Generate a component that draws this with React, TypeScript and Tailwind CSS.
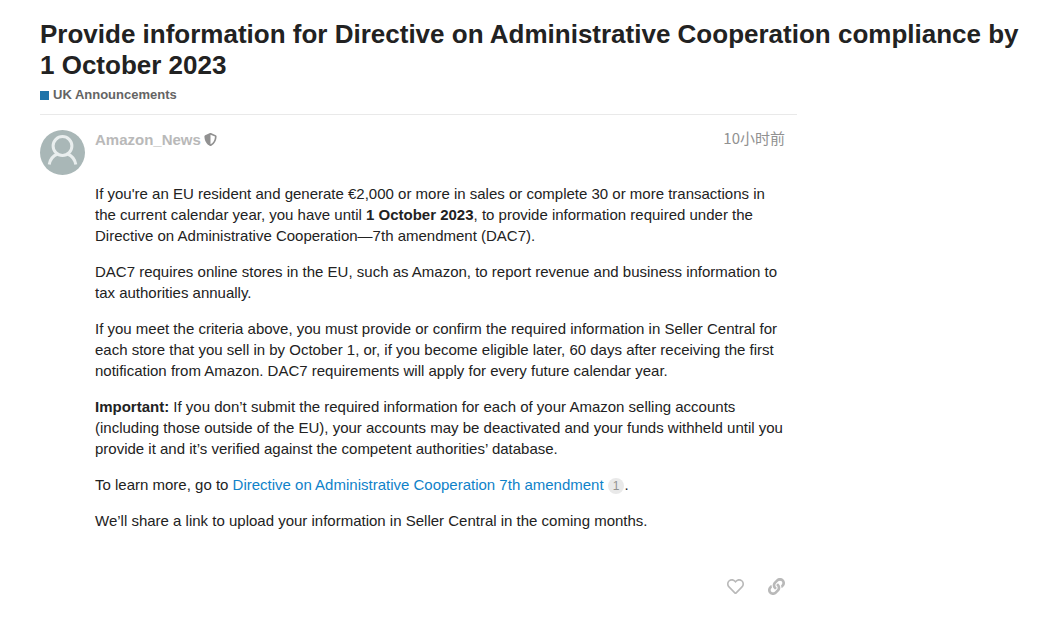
import { FaLink, FaRegHeart } from "react-icons/fa";
import type { ReactNode } from "react";

const Paragraph = ({ children }: { children: ReactNode }) => {
  return <p className="mb-[15px]">{children}</p>;
};

const Avatar = () => {
  return (
    <svg viewBox="0 0 45 45" className="size-[45px] shrink-0" role="img" aria-label="Amazon_News">
      <circle cx="22.5" cy="22.5" r="22.5" fill="#a9b7b7" />
      <g fill="none" stroke="#e9eeee" strokeWidth="3">
        <circle cx="22.5" cy="16" r="9.4" />
        <path d="M9.200 34.500c.8-5 4-8.700 8.200-10.500M35.800 34.500c-.8-5-4-8.700-8.200-10.500" />
      </g>
    </svg>
  );
};

const PostHeader = () => {
  return (
    <header className="flex items-start justify-between text-[15px] leading-[19px]">
      <a href="#author" className="flex items-center gap-[3px] font-bold text-[#b9b9b9]">
        Amazon_News
        <svg viewBox="0 0 512 512" className="size-[13px] fill-[#919191]" aria-hidden="true">
          <path d="M466.500 83.700l-192-80a48.150 48.150 0 0 0-36.900 0l-192 80C27.700 91.100 16 108.600 16 128c0 198.500 114.500 335.700 221.500 380.300 11.800 4.900 25.100 4.900 36.900 0C360.100 472.600 496 349.300 496 128c0-19.400-11.700-36.900-29.500-44.300zM256.100 446.300l-.1-381 175.900 73.300c-3.300 151.400-82.100 261.100-175.800 307.700z" />
        </svg>
      </a>
      <a href="#post" className="font-['Noto_Sans_CJK_SC',sans-serif] leading-4 text-[#919191]">
        10小时前
      </a>
    </header>
  );
};

export default function App() {
  return (
    <main className="px-10 pt-[19px] font-['Liberation_Sans','Noto_Sans_CJK_SC',sans-serif] text-[#222222]">
      <h1 className="-mr-6 text-[26px] leading-[31px] font-bold">
        Provide information for Directive on Administrative Cooperation compliance by 1 October 2023
      </h1>
      <a href="#category" className="mt-1 flex items-center gap-1 text-[13px] leading-5 font-bold text-[#646464]">
        <span className="size-[9px] bg-[#1f74a9]" />
        UK Announcements
      </a>
      <article className="mt-[9px] flex max-w-[757px] gap-[10px] border-t border-[#e9e9e9] pt-[15px] pr-3">
        <Avatar />
        <div className="min-w-0 flex-1">
          <PostHeader />
          <div className="mt-[34px] -mr-1 text-[15px] leading-[21px]">
            <Paragraph>
              If you're an EU resident and generate €2,000 or more in sales or complete 30 or more transactions in the
              current calendar year, you have until <strong>1 October 2023</strong>, to provide information required
              under the Directive on Administrative Cooperation—7th amendment (DAC7).
            </Paragraph>
            <Paragraph>
              DAC7 requires online stores in the EU, such as Amazon, to report revenue and business information to tax
              authorities annually.
            </Paragraph>
            <Paragraph>
              If you meet the criteria above, you must provide or confirm the required information in Seller Central for
              each store that you sell in by October 1, or, if you become eligible later, 60 days after receiving the
              first notification from Amazon. DAC7 requirements will apply for every future calendar year.
            </Paragraph>
            <Paragraph>
              <strong>Important:</strong> If you don’t submit the required information for each of your Amazon selling
              accounts (including those outside of the EU), your accounts may be deactivated and your funds withheld
              until you provide it and it’s verified against the competent authorities’ database.
            </Paragraph>
            <Paragraph>
              To learn more, go to{" "}
              <a href="#directive" className="text-[#0f82c9]">
                Directive on Administrative Cooperation 7th amendment
              </a>{" "}
              <span className="inline-block rounded-full bg-[#e9e9e9] px-[5px] text-xs leading-4 text-[#919191]">1</span>
              .
            </Paragraph>
            <Paragraph>We’ll share a link to upload your information in Seller Central in the coming months.</Paragraph>
          </div>
          <div className="mt-[47px] flex justify-end gap-6 text-[17px] text-[#b9b9b9]">
            <button type="button" aria-label="Like">
              <FaRegHeart />
            </button>
            <button type="button" aria-label="Copy link">
              <FaLink />
            </button>
          </div>
        </div>
      </article>
    </main>
  );
}
